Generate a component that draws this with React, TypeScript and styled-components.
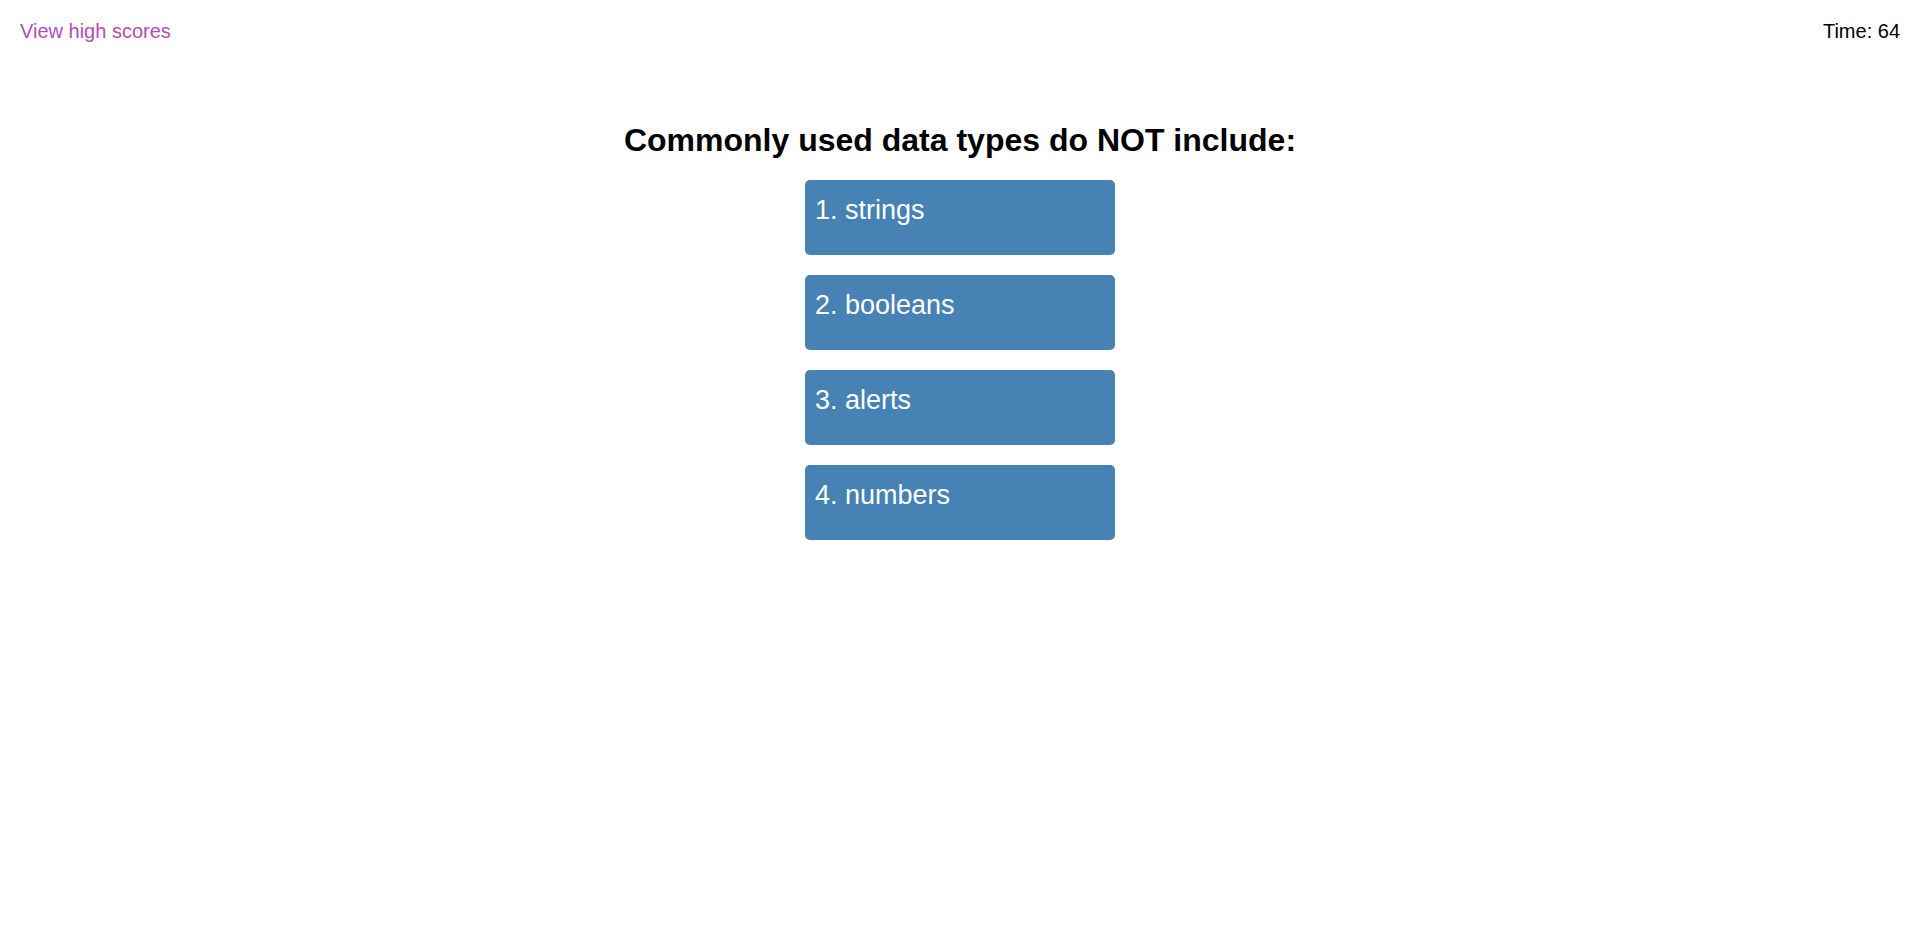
import React from "react";
import styled, { createGlobalStyle } from "styled-components";

const Global = createGlobalStyle`
  html, body {
    margin: 0;
    padding: 0;
    background: #ffffff;
    font-family: "Liberation Sans", Arial, sans-serif;
  }
  * { box-sizing: border-box; }
`;

const Page = styled.div`
  display: flex;
  flex-direction: column;
  min-height: 929px;
`;

const TopBar = styled.header`
  display: flex;
  justify-content: space-between;
  align-items: flex-start;
  padding: 20px 20px 0 20px;
  font-size: 20px;
  line-height: 23px;
`;

const HighScoresLink = styled.a`
  color: #b34db6;
  text-decoration: none;
  cursor: pointer;
`;

const Timer = styled.div`
  color: #000000;
`;

const Quiz = styled.main`
  display: flex;
  flex-direction: column;
  align-items: center;
  padding-top: 79px;
`;

const Question = styled.h1`
  margin: 0 0 21px 0;
  font-size: 32px;
  line-height: 37px;
  font-weight: 700;
  color: #000000;
  text-align: center;
`;

const Choices = styled.div`
  display: flex;
  flex-direction: column;
  gap: 20px;
`;

const Choice = styled.button`
  display: flex;
  align-items: flex-start;
  width: 310px;
  height: 75px;
  padding: 15px 10px;
  border: none;
  border-radius: 5px;
  background: #4682b4;
  color: #ffffff;
  font-family: "Liberation Sans", Arial, sans-serif;
  font-size: 27px;
  line-height: 31px;
  text-align: left;
  cursor: pointer;
`;

const choices = ["1. strings", "2. booleans", "3. alerts", "4. numbers"];

export default function App() {
  return (
    <>
      <Global />
      <Page>
        <TopBar>
          <HighScoresLink>View high scores</HighScoresLink>
          <Timer>Time: 64</Timer>
        </TopBar>
        <Quiz>
          <Question>Commonly used data types do NOT include:</Question>
          <Choices>
            {choices.map((c) => (
              <Choice key={c}>{c}</Choice>
            ))}
          </Choices>
        </Quiz>
      </Page>
    </>
  );
}
